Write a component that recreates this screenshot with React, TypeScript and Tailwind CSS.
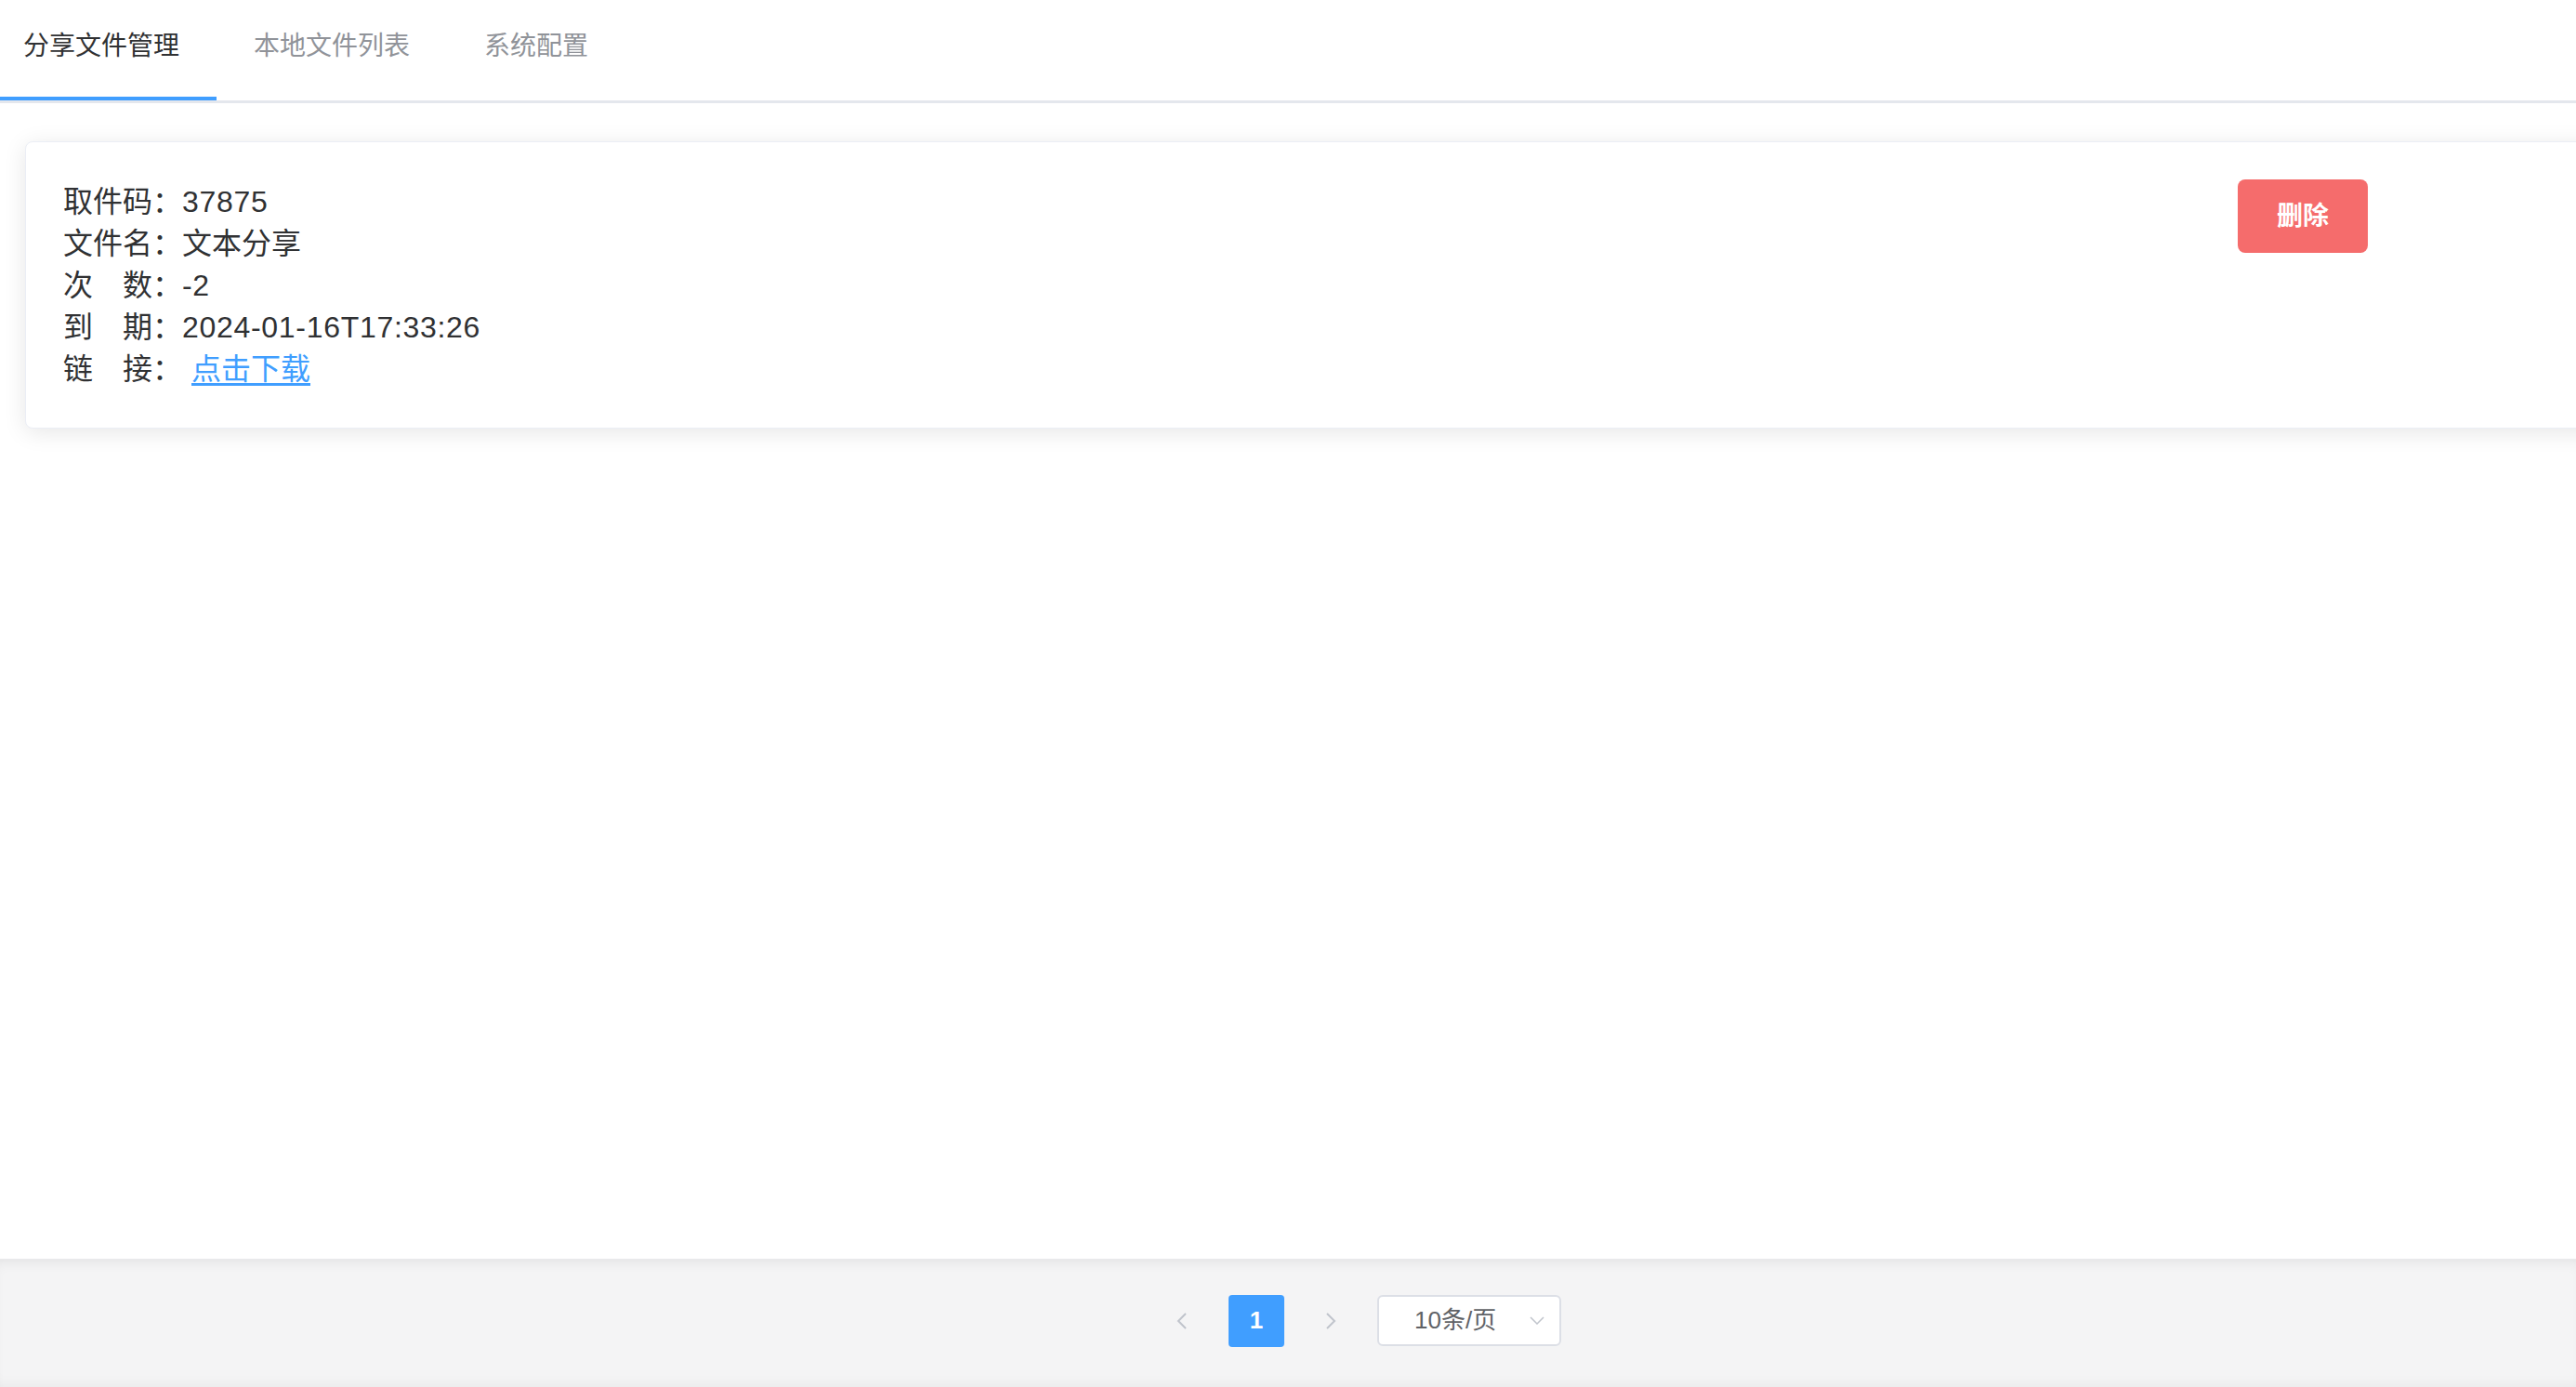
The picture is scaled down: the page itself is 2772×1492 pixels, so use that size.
import { useState } from "react";

const tabs = ["分享文件管理", "本地文件列表", "系统配置"];

const font = { fontFamily: '"Liberation Sans", "Noto Sans CJK SC", sans-serif' };

export default function App() {
  const [active, setActive] = useState(0);

  return (
    <div
      className="h-screen w-full overflow-hidden flex flex-col bg-white text-[#303133]"
      style={font}
    >
      {/* Tabs */}
      <div className="flex border-b-[3px] border-[#e4e7ed] shrink-0">
        {tabs.map((t, i) => (
          <button
            key={t}
            onClick={() => setActive(i)}
            className={`relative h-[108px] pb-[9px] flex items-center text-[28px] ${
              i === 0 ? "pl-[25px] pr-[40px]" : "px-[40px]"
            } ${active === i ? "text-[#303133]" : "text-[#909399]"}`}
          >
            {t}
            {active === i && <span className="absolute left-0 right-0 bottom-0 h-[4px] bg-[#409eff]" />}
          </button>
        ))}
      </div>

      {/* Content */}
      <div className="flex-1 min-h-0">
        <div className="ml-[27px] mt-[41px] w-full bg-white border border-[#ebeef5] rounded-[8px] shadow-[0_4px_24px_rgba(0,0,0,0.1)] p-[40px] flex justify-between items-start">
          <div className="text-[32px] leading-[45px] text-[#303133] pt-[2px]">
            <div className="flex">
              <span className="w-[128px]">取件码：</span>
              <span className="tracking-[0.7px]">37875</span>
            </div>
            <div className="flex">
              <span className="w-[128px]">文件名：</span>
              <span>文本分享</span>
            </div>
            <div className="flex">
              <span className="w-[128px]">次　数：</span>
              <span className="tracking-[0.7px]">-2</span>
            </div>
            <div className="flex">
              <span className="w-[128px]">到　期：</span>
              <span className="tracking-[0.7px]">2024-01-16T17:33:26</span>
            </div>
            <div className="flex">
              <span className="w-[138px]">链　接：</span>
              <a href="#" className="text-[#409eff] underline underline-offset-[4px]">
                点击下载
              </a>
            </div>
          </div>
          <button className="mr-[210px] w-[140px] h-[79px] rounded-[8px] bg-[#f56c6c] text-white text-[28px] font-bold">
            删除
          </button>
        </div>
      </div>

      {/* Pagination */}
      <div className="h-[138px] shrink-0 bg-[#f4f4f5] border-t border-[#e9e9eb] shadow-[inset_0_10px_14px_-8px_rgba(0,0,0,0.08),inset_0_-12px_14px_-10px_rgba(0,0,0,0.05)] flex items-center justify-center pl-[140px] pb-[6px]">
        <div className="flex items-center">
          <button className="w-[60px] h-[56px] mx-[10px] flex items-center justify-center text-[#c0c4cc] bg-[#f4f4f5]">
            <svg width="12" height="18" viewBox="0 0 12 18" fill="none" stroke="currentColor" strokeWidth="2">
              <path d="M10 1L2 9l8 8" />
            </svg>
          </button>
          <button className="w-[60px] h-[56px] mx-[10px] rounded-[4px] bg-[#409eff] text-white text-[26px] font-bold">
            1
          </button>
          <button className="w-[60px] h-[56px] mx-[10px] flex items-center justify-center text-[#c0c4cc] bg-[#f4f4f5]">
            <svg width="12" height="18" viewBox="0 0 12 18" fill="none" stroke="currentColor" strokeWidth="2">
              <path d="M2 1l8 8-8 8" />
            </svg>
          </button>
          <div className="ml-[10px] w-[198px] h-[55px] bg-white border-[2px] border-[#dcdfe6] rounded-[6px] flex items-center justify-between pl-[38px] pr-[16px]">
            <span className="text-[26px] text-[#606266]">10条/页</span>
            <svg width="16" height="9" viewBox="0 0 16 9" fill="none" stroke="#c0c4cc" strokeWidth="1.5">
              <path d="M1 1l7 7 7-7" />
            </svg>
          </div>
        </div>
      </div>
    </div>
  );
}
